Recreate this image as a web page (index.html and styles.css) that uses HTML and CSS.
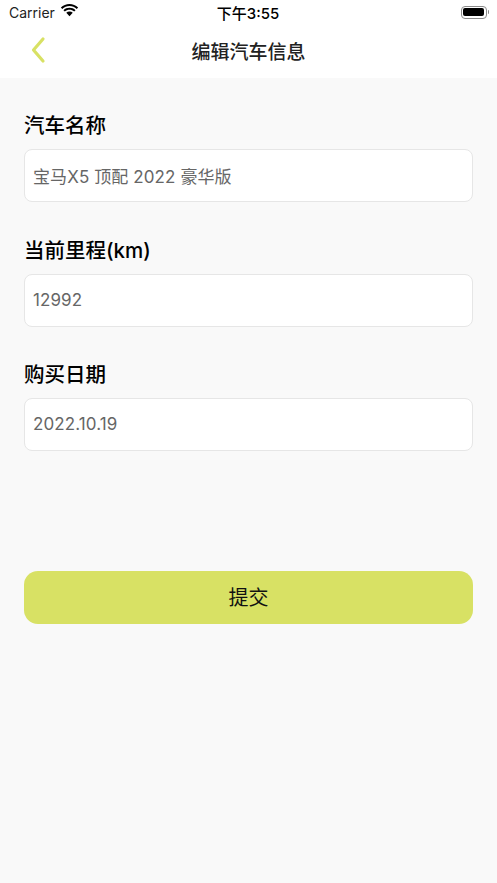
FILE: index.html
```html
<!DOCTYPE html>
<html lang="zh-CN">
<head>
<meta charset="utf-8">
<title>编辑汽车信息</title>
<link rel="stylesheet" href="styles.css">
</head>
<body>
<header class="top">
  <div class="status">
    <div class="status-left">
      <span class="carrier">Carrier</span>
      <svg class="wifi" viewBox="0 0 20 14" width="19" height="13"><path d="M10 2.200c3 0 5.700 1.100 7.800 3.100l1.500-1.600C16.800 1.300 13.500 0 10 0S3.200 1.300.7 3.700l1.500 1.600C4.300 3.300 7 2.200 10 2.200z"/><path d="M10 6.200c1.900 0 3.600.7 5 2l1.500-1.600C14.700 4.900 12.400 4 10 4s-4.700.9-6.500 2.600L5 8.200c1.400-1.300 3.100-2 5-2z"/><path d="M10 8.100c-1.300 0-2.500.5-3.500 1.400L10 13.200l3.500-3.700c-1-.9-2.200-1.400-3.500-1.400z"/></svg>
    </div>
    <span class="time">下午3:55</span>
    <div class="battery"><span class="battery-body"><span class="battery-fill"></span></span><span class="battery-cap"></span></div>
  </div>
  <nav class="nav">
    <svg class="back" viewBox="0 0 16 28" width="16" height="28"><path d="M13 3 3.500 14 13 25" fill="none" stroke="#d8e164" stroke-width="3.200" stroke-linecap="round" stroke-linejoin="round"/></svg>
    <h1 class="title">编辑汽车信息</h1>
  </nav>
</header>
<main class="form">
  <section class="field">
    <label class="label">汽车名称</label>
    <div class="input">宝马X5 顶配 2022 豪华版</div>
  </section>
  <section class="field">
    <label class="label">当前里程(km)</label>
    <div class="input">12992</div>
  </section>
  <section class="field">
    <label class="label">购买日期</label>
    <div class="input">2022.10.19</div>
  </section>
  <button class="submit" type="button">提交</button>
</main>
</body>
</html>
```
FILE: styles.css
```css
* { box-sizing: border-box; }
html, body { margin: 0; height: 100%; }
body {
  background: #f9f9f9;
  font-family: Inter, "Noto Sans CJK SC", "Noto Sans", sans-serif;
  color: #000;
  overflow: hidden;
}
.top { background: #fff; height: 78px; }
.status {
  height: 26px;
  padding: 0 8px 2px 9px;
  display: grid;
  grid-template-columns: 1fr auto 1fr;
  align-items: center;
}
.status-left { display: flex; align-items: center; gap: 5px; }
.carrier { font-size: 14px; color: #222; }
.wifi { display: block; margin-top: -3px; }
.time { font-size: 15px; font-weight: 500; margin-left: -2px; }
.battery { justify-self: end; display: flex; align-items: center; gap: 1px; }
.battery-body {
  width: 26px; height: 13px;
  border: 1px solid #8a8a8a;
  border-radius: 4px;
  padding: 1.500px;
  display: block;
}
.battery-fill { display: block; height: 100%; background: #000; border-radius: 2px; }
.battery-cap { width: 1.500px; height: 4px; background: #8a8a8a; border-radius: 0 1px 1px 0; }
.nav {
  position: relative;
  height: 52px;
  display: flex;
  align-items: center;
  justify-content: center;
}
.back { position: absolute; left: 30px; top: 10px; }
.title { margin: -4px 0 0; font-size: 19px; font-weight: 500; color: #222; }
.form { padding: 32px 24px 0; display: flex; flex-direction: column; }
.field { display: flex; flex-direction: column; margin-bottom: 32.500px; }
.label { font-size: 20.500px; font-weight: 500; line-height: 30px; margin-bottom: 8px; height: 31px; padding-top: 1px; }
.input {
  height: 53px;
  background: #fff;
  border: 1px solid #e6e6e6;
  border-radius: 8px;
  padding: 0 8px 1px;
  display: flex;
  align-items: center;
  font-size: 17px;
  letter-spacing: 0.1px;
  color: #666;
  white-space: pre;
}
.submit {
  margin-top: 87.500px;
  height: 53px;
  border: 0;
  border-radius: 14px;
  background: #d8e164;
  color: #111;
  font: inherit;
  font-size: 20px;
  padding: 0 0 2px;
}
```
